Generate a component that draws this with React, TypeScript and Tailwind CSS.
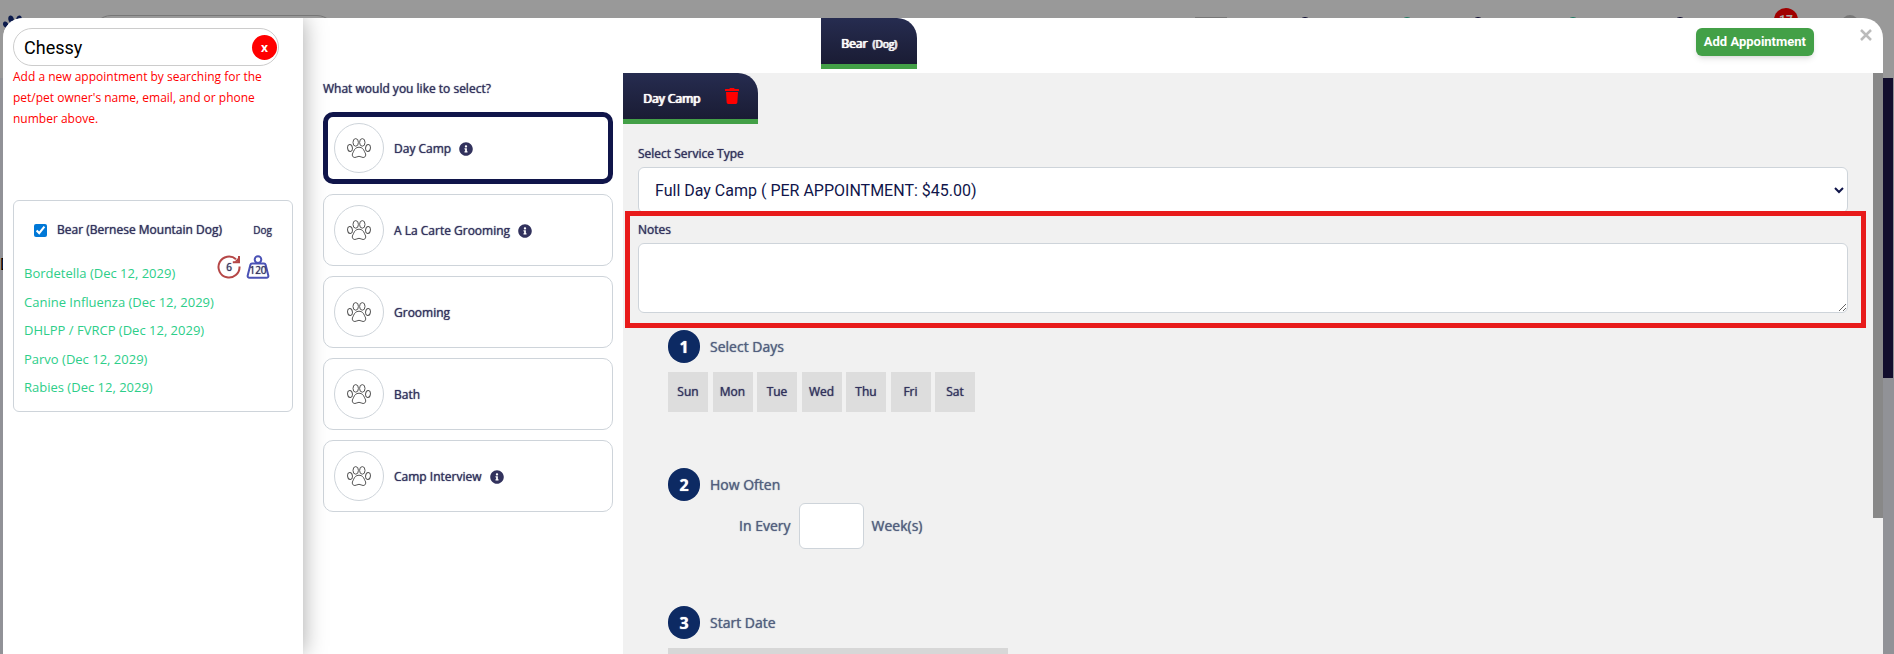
import React, { useState } from 'react';
import { FaInfoCircle, FaPaw, FaTrash } from 'react-icons/fa';

interface Service {
  id: string;
  name: string;
  hasInfo: boolean;
}

const services: Service[] = [
  { id: 'day-camp', name: 'Day Camp', hasInfo: true },
  { id: 'a-la-carte', name: 'A La Carte Grooming', hasInfo: true },
  { id: 'grooming', name: 'Grooming', hasInfo: false },
  { id: 'bath', name: 'Bath', hasInfo: false },
  { id: 'camp-interview', name: 'Camp Interview', hasInfo: true },
];

const vaccines = ['Bordetella', 'Canine Influenza', 'DHLPP / FVRCP', 'Parvo', 'Rabies'];

const days = ['Sun', 'Mon', 'Tue', 'Wed', 'Thu', 'Fri', 'Sat'];

const PawOutline = () => (
  <svg viewBox="0 0 24 20" className="h-5 w-6" fill="none" stroke="#555" strokeWidth="1">
    <ellipse cx="8.7" cy="4.4" rx="2.7" ry="3.8" />
    <ellipse cx="15.3" cy="4.4" rx="2.7" ry="3.8" />
    <ellipse cx="3" cy="10" rx="2.4" ry="3.5" transform="rotate(-8 3 10)" />
    <ellipse cx="21" cy="10" rx="2.4" ry="3.5" transform="rotate(8 21 10)" />
    <path d="M12 9.2c3.2 0 4.6 2.2 5.3 4 .5 1.3 1.500 2.300 1.400 3.900-.1 1.600-1.300 2.400-2.600 2.400-1.500 0-2.500-1.200-4.100-1.200s-2.600 1.200-4.100 1.200c-1.300 0-2.500-.8-2.600-2.400-.1-1.600.9-2.600 1.400-3.900.7-1.800 2.100-4 5.300-4z" />
  </svg>
);

const RepeatIcon = () => (
  <svg viewBox="0 0 24 24" className="h-6 w-6" fill="none" stroke="#b54747" strokeWidth="2">
    <path d="M22.500 11.500A10.500 10.500 0 1 1 19 4.200" />
    <path d="M22 1v6.200h-6.200" />
    <path d="M21.500 6.800L17.500 6.800L21.500 2.500z" fill="#b54747" stroke="none" />
  </svg>
);

const WeightIcon = () => (
  <svg viewBox="0 0 24 24" className="h-6 w-6" fill="none" stroke="#4a52b5" strokeWidth="2" strokeLinejoin="round">
    <circle cx="12" cy="4.600" r="3.300" />
    <path d="M6 8.500h12c.8 0 1.400.5 1.600 1.300l2.700 10.600c.3 1.300-.5 2.300-1.800 2.300h-17c-1.300 0-2.100-1-1.800-2.300L4.400 9.800c.2-.8.8-1.300 1.600-1.300z" />
  </svg>
);

// Page that sits dimmed behind the modal
const Backdrop = () => (
  <div aria-hidden="true" className="h-screen bg-[#919297]">
    <div className="flex h-[78px] items-start bg-[#999]">
      <FaPaw className="mt-[14px] ml-[3px] h-6 w-6 text-[#0c1b4c]" />
      <div className="mt-[15px] ml-[66px] h-9 w-[242px] rounded-full border border-[#777]" />
      <div className="mr-9 ml-auto flex items-start pt-[17px]">
        <div className="mr-[72px] h-1 w-8 bg-[#777]" />
        <div className="mr-[90px] h-3 w-3 rounded-full bg-[#0c0a30]" />
        <div className="mr-[59px] h-3 w-3 rounded-full bg-[#1a7a60]" />
        <div className="mr-[83px] h-3 w-3 rounded-full bg-[#0c0a30]" />
        <div className="mr-[95px] h-3 w-3 rounded-full bg-[#1a7a60]" />
        <div className="mr-[88px] h-3 w-3 rounded-full bg-[#0c0a30]" />
        <div className="-mt-[9px] mr-[44px] h-6 w-6 rounded-full bg-[#a00000] text-center font-['Roboto'] text-xs leading-6 font-bold text-[#aaa]">17</div>
        <div className="-mt-[2px] h-4 w-4 rounded-full bg-[#777]" />
      </div>
    </div>
    <div className="h-[300px] w-full pr-px">
      <div className="ml-auto h-full w-5 bg-[#120e2d]" />
    </div>
    <span className="absolute top-[253px] left-0 font-['Roboto'] text-base text-black">D</span>
  </div>
);

const Sidebar = () => (
  <aside className="z-10 w-[300px] shrink-0 bg-white px-[10px] pt-[10px] shadow-[0_0_22px_rgba(0,0,0,0.35)]">
    <div className="relative w-[266px]">
      <input
        type="text"
        aria-label="Search pet or owner"
        defaultValue="Chessy"
        className="block h-[38px] w-full rounded-full border border-[#ccc] pr-8 pl-[10px] font-['Roboto'] text-lg text-black outline-none"
      />
      <button aria-label="Clear search" className="absolute top-[7px] right-[2px] h-[25px] w-[25px] rounded-full bg-[red] text-xs font-bold text-white">
        x
      </button>
    </div>
    <p className="w-[266px] text-xs leading-[21px] text-[red]">
      Add a new appointment by searching for the pet/pet owner's name, email, and or phone number above.
    </p>

    <div className="mt-[71px] rounded-md border border-[#ced4da] px-[10px] pt-[19px] pb-[14px]">
      <div className="flex h-5 items-center justify-between px-[10px]">
        <label className="flex items-center gap-[10px] text-xs [text-shadow:0_0_1px]">
          <input type="checkbox" defaultChecked className="h-[13px] w-[13px] accent-[#0078d7]" />
          Bear (Bernese Mountain Dog)
        </label>
        <span className="text-[10px] [text-shadow:0_0_1px]">Dog</span>
      </div>
      <div className="mt-[23px] flex justify-between">
        <ul className="flex h-[134px] flex-col justify-between text-[13px] leading-5 text-[#2dce89]">
          {vaccines.map(vaccine => (
            <li key={vaccine}>{vaccine} (Dec 12, 2029)</li>
          ))}
        </ul>
        <div className="-mt-2 mr-3 flex gap-[5px] text-[10px] [text-shadow:0_0_1px]">
          <div className="relative h-6 w-6">
            <RepeatIcon />
            <span className="absolute inset-0 text-center leading-6">6</span>
          </div>
          <div className="relative h-6 w-6">
            <WeightIcon />
            <span className="absolute inset-x-0 top-[3px] text-center leading-6">120</span>
          </div>
        </div>
      </div>
    </div>
  </aside>
);

interface ServiceListProps {
  selected: string;
  onSelect: (id: string) => void;
}

const ServiceList: React.FC<ServiceListProps> = ({ selected, onSelect }) => (
  <section className="w-[320px] shrink-0 pt-[5px] pr-[10px] pl-5">
    <h2 className="text-xs leading-[22px] [text-shadow:0_0_1px]">What would you like to select?</h2>
    <div className="mt-3 flex flex-col gap-[10px]">
      {services.map(service => (
        <button
          key={service.id}
          onClick={() => onSelect(service.id)}
          className={`flex h-[72px] items-center gap-[10px] rounded-[10px] text-xs [text-shadow:0_0_1px] ${
            selected === service.id ? 'border-[5px] border-[#10154a] px-[6px]' : 'border border-[#ced4da] px-[10px]'
          }`}
        >
          <span className="flex h-[50px] w-[50px] items-center justify-center rounded-full border border-[#ced4da]">
            <PawOutline />
          </span>
          <span className="flex items-center gap-2 pt-[2px]">
            {service.name}
            {service.hasInfo && <FaInfoCircle className="h-[14px] w-[14px]" />}
          </span>
        </button>
      ))}
    </div>
  </section>
);

const StepTitle: React.FC<{ step: number; title: string }> = ({ step, title }) => (
  <h3 className="flex items-center gap-[10px] text-sm text-[#525f7f] [text-shadow:0_0_1px]">
    <span className="flex h-[33px] w-8 items-center justify-center rounded-full bg-[#0d2a63] text-base font-bold text-white">{step}</span>
    {title}
  </h3>
);

const ServiceForm = () => (
  <form className="min-w-0 flex-1" onSubmit={e => e.preventDefault()}>
    <div className="flex h-[51px] w-[135px] items-center justify-between rounded-tr-[20px] border-b-[5px] border-[#43a047] bg-linear-to-b from-[#262c50] to-[#1a1c34] pr-[19px] pl-5">
      <span className="pt-[6px] text-xs text-white [text-shadow:1px_0,0_0_1px]">Day Camp</span>
      <button type="button" aria-label="Remove Day Camp">
        <FaTrash className="h-4 w-[14px] text-[red]" />
      </button>
    </div>

    <div className="pr-[25px] pl-[15px]">
      <label htmlFor="service-type" className="mt-[18px] block pb-[2px] text-xs leading-[23px] [text-shadow:0_0_1px]">Select Service Type</label>
      <select
        id="service-type"
        className="block h-[46px] w-full rounded-md border border-[#ced4da] bg-white pl-3 font-['Roboto'] text-base text-[#10154a]"
      >
        <option>Full Day Camp ( PER APPOINTMENT: $45.00)</option>
      </select>

      <div className="relative mt-[5px] pb-[17px]">
        <div className="pointer-events-none absolute -top-[7px] -right-[18px] bottom-[2px] -left-[13px] border-[5px] border-[#e81b1b]" />
        <label htmlFor="notes" className="block pb-[2px] text-xs leading-[23px] [text-shadow:0_0_1px]">Notes</label>
        <textarea id="notes" className="block h-[70px] w-full rounded-md border border-[#ced4da] bg-white p-2" />
      </div>
    </div>

    <div className="pl-[45px]">
      <StepTitle step={1} title="Select Days" />
      <div className="mt-[9px] flex w-[307px] justify-between">
        {days.map(day => (
          <button key={day} type="button" className="h-10 w-10 bg-[#ddd] text-xs [text-shadow:0_0_1px]">{day}</button>
        ))}
      </div>

      <div className="mt-14">
        <StepTitle step={2} title="How Often" />
        <div className="mt-[2px] flex items-center gap-2 pl-[71px] text-sm text-[#525f7f] [text-shadow:0_0_1px]">
          <label htmlFor="weeks">In Every</label>
          <input id="weeks" type="text" className="h-[46px] w-[65px] rounded-md border border-[#ced4da] bg-white px-3" />
          <span>Week(s)</span>
        </div>
      </div>

      <div className="mt-[57px]">
        <StepTitle step={3} title="Start Date" />
        <input type="text" aria-label="Start date" className="mt-[9px] block h-[46px] w-[340px] bg-[#d7d7d7] px-3" />
      </div>
    </div>
  </form>
);

export default function App() {
  const [selected, setSelected] = useState('day-camp');

  return (
    <div className="relative h-screen overflow-hidden font-['Open_Sans',sans-serif] text-[#32325d]">
      <Backdrop />
      <div role="dialog" aria-label="Add appointment" className="absolute top-[18px] right-[11px] bottom-0 left-[3px] flex overflow-hidden rounded-t-[20px] bg-white">
        <Sidebar />
        <div className="flex min-w-0 flex-1 flex-col">
          <header className="flex h-[55px] shrink-0 items-start pr-[11px]">
            <button className="ml-[518px] h-[51px] rounded-tr-[20px] border-b-[5px] border-[#43a047] bg-linear-to-b from-[#262c50] to-[#1a1c34] px-5 pt-[6px] text-xs text-white [text-shadow:1px_0,0_0_1px]">
              Bear <span className="ml-[2px] text-[10px]">(Dog)</span>
            </button>
            <button className="mt-[10px] ml-auto h-7 rounded-md bg-[#43a047] px-2 font-['Roboto'] text-[13px] font-bold text-white shadow-md">
              Add Appointment
            </button>
            <button aria-label="Close" className="mt-[11px] ml-[46px] text-[#bbb]">
              <svg viewBox="0 0 12 12" className="h-3 w-3" fill="none" stroke="currentColor" strokeWidth="2.500">
                <path d="M1 1l10 10M11 1L1 11" />
              </svg>
            </button>
          </header>
          <div className="flex min-h-0 flex-1">
            <ServiceList selected={selected} onSelect={setSelected} />
            <div className="flex min-w-0 flex-1 overflow-hidden bg-[#f1f1f1]">
              <ServiceForm />
              <div className="h-[445px] w-[10px] shrink-0 bg-[#888]" />
            </div>
          </div>
        </div>
      </div>
    </div>
  );
}
